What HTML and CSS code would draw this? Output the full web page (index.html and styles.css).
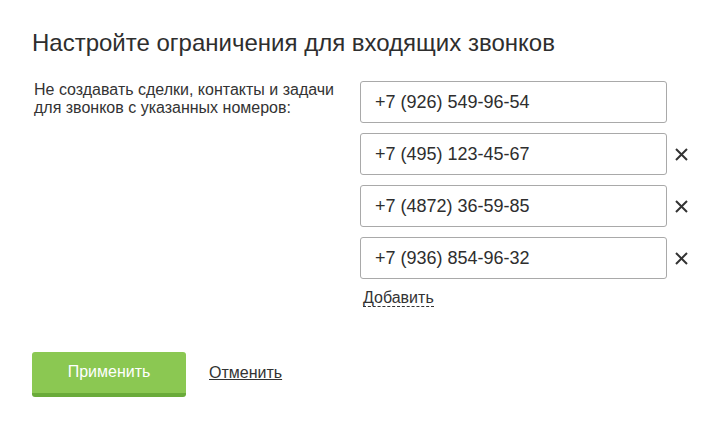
FILE: index.html
```html
<!DOCTYPE html>
<html lang="ru">
<head>
    <meta charset="UTF-8">
    <title>Ограничения для входящих звонков</title>
    <link rel="stylesheet" href="styles.css">
</head>
<body>
    <div class="settings">
        <h1>Настройте ограничения для входящих звонков</h1>
        <div class="settings-row">
            <div class="settings-label">Не создавать сделки, контакты и задачи для звонков с указанных номеров:</div>
            <div class="phones">
                <div class="phone-row">
                    <input type="text" class="phone-input" value="+7 (926) 549-96-54">
                </div>
                <div class="phone-row">
                    <input type="text" class="phone-input" value="+7 (495) 123-45-67">
                    <span class="remove">
                        <svg width="13" height="13" viewBox="0 0 13 13"><path d="M1 1L12 12M12 1L1 12" stroke="#333" stroke-width="2"/></svg>
                    </span>
                </div>
                <div class="phone-row">
                    <input type="text" class="phone-input" value="+7 (4872) 36-59-85">
                    <span class="remove">
                        <svg width="13" height="13" viewBox="0 0 13 13"><path d="M1 1L12 12M12 1L1 12" stroke="#333" stroke-width="2"/></svg>
                    </span>
                </div>
                <div class="phone-row">
                    <input type="text" class="phone-input" value="+7 (936) 854-96-32">
                    <span class="remove">
                        <svg width="13" height="13" viewBox="0 0 13 13"><path d="M1 1L12 12M12 1L1 12" stroke="#333" stroke-width="2"/></svg>
                    </span>
                </div>
                <span class="add-link">Добавить</span>
            </div>
        </div>
        <div class="actions">
            <button type="button" class="btn-apply">Применить</button>
            <a href="#" class="cancel-link">Отменить</a>
        </div>
    </div>
</body>
</html>
```

FILE: styles.css
```css
body {
    font-family: 'Liberation Sans', Arial, sans-serif;
    background-color: #fff;
    color: #333;
    margin: 0;
}
.settings {
    padding: 29px 0 0 32px;
}
h1 {
    font-size: 24px;
    font-weight: normal;
    line-height: 28px;
    color: #2e2e2e;
    margin: 0 0 24px 0;
}
.settings-row {
    display: flex;
}
.settings-label {
    width: 310px;
    padding: 0 0 0 2px;
    font-size: 16px;
    line-height: 18px;
    color: #333;
}
.phones {
    margin-left: 16px;
}
.phone-row {
    display: flex;
    align-items: center;
    margin-bottom: 10px;
}
.phone-input {
    width: 307px;
    height: 42px;
    box-sizing: border-box;
    padding: 0 14px;
    border: 1px solid #a9a9a9;
    border-radius: 3px;
    font-family: 'Liberation Sans', Arial, sans-serif;
    font-size: 18px;
    color: #2e2e2e;
    outline: none;
}
.remove {
    display: flex;
    margin-left: 8px;
    cursor: pointer;
}
.add-link {
    display: inline-block;
    margin: 0 0 0 3px;
    font-size: 16px;
    line-height: 17px;
    color: #333;
    border-bottom: 1px dashed #333;
    cursor: pointer;
}
.actions {
    display: flex;
    align-items: center;
    margin-top: 45px;
}
.btn-apply {
    width: 154px;
    height: 45px;
    padding: 0 0 2px 0;
    background-color: #8bc852;
    color: #fff;
    border: none;
    border-bottom: 4px solid #6aab3a;
    border-radius: 3px;
    font-family: 'Liberation Sans', Arial, sans-serif;
    font-size: 16px;
    cursor: pointer;
}
.cancel-link {
    margin-left: 23px;
    margin-bottom: 4px;
    font-size: 16px;
    color: #333;
    text-decoration: underline;
}
```
